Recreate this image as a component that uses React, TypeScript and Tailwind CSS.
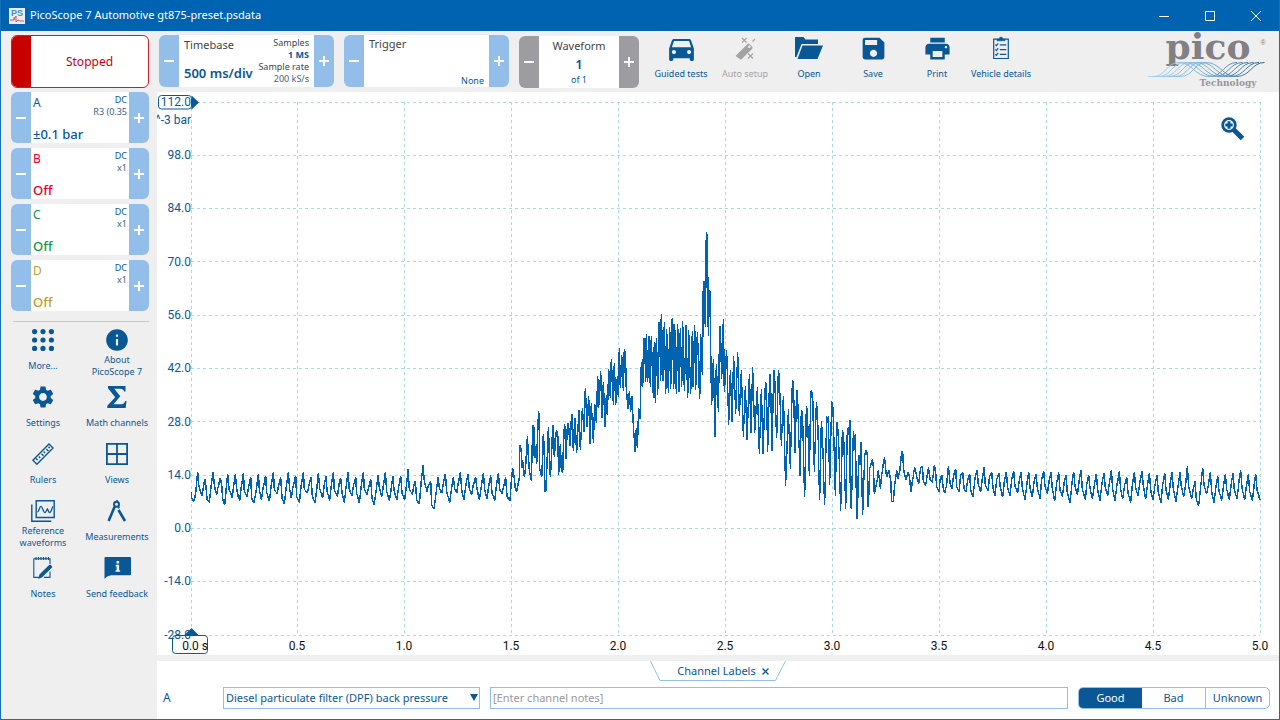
import React from "react";
import { MdDirectionsCar, MdInfo, MdPrint, MdSave, MdSettings } from "react-icons/md";

/* ---------- waveform data: x,y pairs stored at three units per pixel ---------- */

type Segment = { ox: number; oy: number; pts: string };

const segments: Segment[] = [
  {
    ox: 33,
    oy: 358,
    pts: `4,128 5,145 11,155 14,145 18,122 23,66 26,105 30,122 36,137 39,120 44,88 48,110 51,148 58,158 62,120 69,66 73,105 76,122 80,134 83,118 91,84 95,105 98,148 104,166 108,125 113,72 117,118 122,130 126,145 130,115 136,74 140,118 144,137 149,152 153,118 160,69 163,125 171,140 176,110 182,81 185,145 192,160 198,125 205,72 208,118 214,150 220,110 227,78 230,128 238,154 243,110 250,66 253,118 261,132 265,110 272,83 276,145 283,163 288,115 295,68 299,118 304,145 310,105 317,78 320,140 328,158 333,110 340,68 343,118 352,130 357,105 363,82 367,140 375,160 380,120 385,69 389,115 398,145 402,110 408,78 411,125 419,152 424,105 430,66 433,120 442,140 447,105 452,84 456,130 463,158 469,105 474,66 478,120 486,137 491,105 497,81 500,130 508,160 514,105 520,68 523,118 531,134 542,88 546,145 552,166 558,125 564,76 568,115 575,140 580,108 586,66 590,125 598,152 603,120 609,78 612,122 621,150 626,110 632,78 636,130 644,150 649,110 654,58 658,118 667,134 671,110 676,93 680,150 688,163 693,100 699,47 703,95 711,125 716,105 722,93 725,165 732,178 738,130 744,82 748,115 755,130 760,100 766,72 770,125 779,158 784,120 790,83 794,118 800,130 804,105 811,66 815,120 822,150 827,110 834,72 838,118 845,134 850,105 857,83 861,118 868,150 873,115 880,70 884,120 891,148 896,110 902,77 906,130 914,152 919,110 925,69 929,118 936,132 941,110 947,83 951,140 960,154`,
  },
  {
    ox: 353,
    oy: 128,
    pts: `3,795 8,745 13,775 15,803 20,815 24,795 28,775 29,695 31,675 34,697 35,745 38,722 43,772 47,740 52,650 55,710 58,752 64,784 68,622 71,615 73,715 76,680 80,733 83,632 86,574 88,635 89,745 95,772 98,710 100,643 103,698 103,810 107,817 110,757 115,622 118,705 121,772 124,720 128,617 130,615 133,712 139,630 143,640 146,764 151,673 154,750 158,760 161,652 164,612 168,718 172,620 175,610 180,677 185,582 187,583 190,692 195,595 200,700 207,572 211,690 217,565 222,635 226,505 231,622 236,530 240,672 244,550 250,668 254,553 259,608 263,470 266,563 272,455 276,595 280,488 285,620 289,527 292,586 296,447 301,535 304,418 310,555 313,430 317,556 322,470 325,530 328,385 331,505 335,405 340,512 343,388 346,400 349,510 354,568 358,515 362,575 366,530 369,600 375,695 379,625 382,683 386,565 390,597 394,427 398,500 401,358 404,355 407,485 409,343 413,485 416,350 418,348 421,502 424,350 430,535 433,368 436,548 439,355 443,525 446,307 449,310 452,482 454,283 459,482 463,308 467,523 470,328 475,520 479,322 482,508 485,305 488,295 491,508 494,313 499,523 503,313 507,515 511,325 515,500 518,305 523,512 528,317 533,535 536,332 542,523 547,335 549,502 554,317 557,510 562,337 569,538 572,343 577,466 580,190 583,185 586,322 589,38 592,50 595,347 598,212 601,218 602,395 605,555 610,418 615,652 619,433 625,575 629,318 631,318 635,478 640,298 643,515 650,390 656,615 661,452 666,605 671,410 677,582 683,397 688,588 694,452 700,650 706,500 711,660 718,463 723,640 728,443 734,640 742,502 748,703`,
  },
  {
    ox: 583,
    oy: 248,
    pts: `64,148 69,343 76,127 79,138 83,335 89,103 91,105 96,332 101,108 103,90 110,295 115,92 118,110 124,317 130,168 137,438 145,207 151,387 157,122 160,127 165,340 170,152 172,152 180,408 184,212 187,218 194,472 199,200 202,210 208,408 212,175 214,152 218,165 223,395 229,188 232,212 239,480 244,245 247,290 254,495 260,230 262,250 265,230 269,435 275,185 278,200 280,235 286,468 290,248 292,250 296,305 302,513 307,272 311,290 317,508 322,265 325,285 330,242 331,465 334,508 340,275 343,330 346,282 350,525 352,538 356,345 360,375 363,308 368,525 374,347 379,330 382,345 383,485 385,502 389,387 397,358 400,380 403,462 412,418 415,392 421,447 425,405 433,353 440,412 447,392 452,420 455,485 460,485 464,435 470,392 474,417 480,390 485,335 488,338 491,390 498,420 504,398 508,410 513,457 517,425 524,383 530,410 536,432 542,383 547,378 550,425 557,438 565,383 570,420 577,428 583,375 587,400 590,440 597,457`,
  },
  {
    ox: 763,
    oy: 358,
    pts: `60,90 65,75 69,110 74,130 80,105 85,50 90,100 96,117 101,75 107,58 110,110 117,127 122,75 128,68 132,115 138,127 143,90 149,73 152,120 159,142 165,85 171,60 175,105 182,125 187,85 192,53 196,105 204,123 209,78 215,68 219,115 225,138 230,90 237,70 241,115 248,142 253,95 259,66 263,115 270,138 275,90 281,65 285,110 293,130 298,90 303,67 307,115 315,150 321,100 326,68 330,115 337,142 342,95 348,73 352,115 360,147 365,90 371,65 375,110 382,132 387,95 393,68 397,118 404,153 410,100 416,68 420,120 427,140 432,100 438,77 442,130 450,158 456,100 461,66 465,110 472,135 477,95 483,60 487,118 496,150 500,105 506,76 510,115 517,148 523,105 529,72 533,120 540,152 546,100 552,70 556,115 563,137 568,100 574,62 578,118 585,152 591,105 598,65 602,120 608,147 614,105 620,82 624,130 632,158 637,105 643,68 647,115 654,137 660,95 666,65 670,110 677,147 683,100 688,70 692,120 699,150 705,105 711,77 715,130 723,158 728,105 734,70 738,120 745,150 750,105 756,68 760,118 768,155 774,110 780,68 784,112 791,140 797,105 802,50 806,110 815,147 820,115 825,95 829,150 836,168 842,110 848,55 852,105 860,132 866,100 871,68 875,125 882,160 888,110 893,80 897,125 905,152 911,105 916,73 920,118 928,150 933,105 939,70 943,120 951,148 957,95 962,62 966,115 974,150 979,110 985,73 989,125 997,153 1002,110 1007,73 1011,120 1020,150`,
  },
];

const samples = segments.flatMap((s) =>
  s.pts.split(/\s+/).map((p) => {
    const [x, y] = p.split(",").map(Number);
    return [s.ox + x / 3, s.oy + y / 3] as const;
  }),
);

/* One vertical stroke per column, spanning the values of the pen's width around it. */
function columns() {
  const pen = 0.3;
  const range = new Map<number, [number, number]>();
  const grow = (c: number, y: number) => {
    const r = range.get(c);
    range.set(c, r ? [Math.min(r[0], y), Math.max(r[1], y)] : [y, y]);
  };
  samples.forEach(([x, y], i) => {
    const [nx, ny] = samples[i + 1] ?? [x, y];
    for (let k = 0; k <= 12; k++) {
      const px = x + ((nx - x) * k) / 12;
      const py = y + ((ny - y) * k) / 12;
      grow(Math.floor(px - pen), py);
      grow(Math.floor(px + pen), py);
    }
  });
  return [...range].map(([c, [lo, hi]]) => `M${c + 0.5} ${Math.floor(lo)}V${Math.max(Math.round(hi), Math.floor(lo) + 1)}`).join("");
}

const trace = columns();

/* ---------- icons ---------- */

const WandIcon = () => (
  <svg width="24" height="24" viewBox="0 0 24 24" fill="none" stroke="currentColor">
    <path d="M2.500 20 14.300 8.200a1.600 1.600 0 0 1 2.300 0l2.400 2.400a1.600 1.600 0 0 1 0 2.300L8 23.800z" fill="currentColor" stroke="none" />
    <circle cx="16.300" cy="10.800" r="1.300" fill="#efefef" stroke="none" />
    <path d="m9 2 4.500 4.500m0-4.500L9 6.500M15 17.500l5 5m0-5-5 5M19.500 5.500 22 3" strokeWidth="1.100" />
  </svg>
);

const FolderIcon = () => (
  <svg width="28" height="24" viewBox="0 0 28 24" fill="currentColor">
    <path d="M0 1h8.500l2 2.500H23V8H6.500L1.500 21H0z" />
    <path d="M7.500 9.500H28L22.500 23H2.500z" />
  </svg>
);

const ClipboardIcon = () => (
  <svg width="18" height="24" viewBox="0 0 18 24" fill="none" stroke="currentColor" strokeWidth="1.200">
    <path d="M5 3.200H1.700v19.300h14.600V3.200H13" />
    <path d="M5 4.800V2.800h2.300a1.700 1.700 0 0 1 3.400 0H13v2z" fill="currentColor" strokeWidth=".6" />
    <path d="m3.300 8.600 1.100 1.100 1.800-2.400M3.300 13.400l1.100 1.100 1.800-2.400M3.300 18.200l1.100 1.100 1.800-2.400M7.800 8.800h6.500M7.800 13.600h6.500M7.800 18.400h6.500" strokeWidth="1.200" />
  </svg>
);

const DotsIcon = () => (
  <svg width="22" height="22" viewBox="0 0 22 22" fill="currentColor">
    {[2.6, 11, 19.4].map((y) => [2.6, 11, 19.4].map((x) => <circle key={`${x}-${y}`} cx={x} cy={y} r="2.6" />))}
  </svg>
);

const SigmaIcon = () => (
  <svg width="20" height="22" viewBox="0 0 20 22" fill="currentColor">
    <path d="M1 0h17.500v5.500h-1.300C16.600 3.500 15.500 2.700 13 2.700H7.300l6 7.600-6.800 7.900h7.300c2.600 0 3.700-1 4.300-3.200h1.400L18.700 22H.3v-2.200l7.900-8.600L1 2.200z" />
  </svg>
);

const RulerIcon = () => (
  <svg width="22" height="22" viewBox="0 0 22 22" fill="none" stroke="currentColor" strokeWidth="1.400">
    <path d="M.9 17.200 17 1.100l4 4L4.900 21.200zM5.600 17.100l-1.700-1.700M8.200 14.900l-1.300-1.300M11.500 12.700l-2-2M13 9.900l-1.300-1.300M16.300 7.900l-2-2M17.800 5l-1.300-1.300" />
  </svg>
);

const ViewsIcon = () => (
  <svg width="22" height="22" viewBox="0 0 22 22" fill="none" stroke="currentColor" strokeWidth="1.800">
    <path d="M.9.9h20.200v20.200H.9zM11 1v20M1 11h20" />
  </svg>
);

const ReferenceIcon = () => (
  <svg width="24" height="22" viewBox="0 0 24 22" fill="none" stroke="currentColor" strokeWidth="1.400">
    <path d="M5.200.7h18v16.800h-18zM.8 4.500v16.800h19.500" />
    <path d="M6.500 12C8 12 8.400 6.300 10 6.300s2.200 6.300 3.700 6.300 1.600-2.600 2.700-3.600c1 1 1 3.600 2.400 3.600s2.200-6 3.400-6.300" strokeWidth="1.300" />
  </svg>
);

const CompassIcon = () => (
  <svg width="20" height="22" viewBox="0 0 20 22" fill="none" stroke="currentColor">
    <circle cx="9.500" cy="4.300" r="2.500" strokeWidth="2" />
    <path d="M10 0v2" strokeWidth="1.500" />
    <path d="m7.600 6.800-6 14.200M11.500 10l6.500 11" strokeWidth="2.600" />
    <path d="m11.200 6.500 1 1.800" strokeWidth="1.800" />
  </svg>
);

const NotesIcon = () => (
  <svg width="22" height="22" viewBox="0 0 22 22" fill="none" stroke="currentColor">
    <path d="M18 7V1.800H1.800v18.600h5M12 20.400h6v-6" strokeWidth="1.100" />
    <path d="M4 0v3M6.500 0v3M9 0v3M11.500 0v3M14 0v3M16.500 0v3" strokeWidth="1.200" />
    <path d="m7.500 17.500 9.800-9.700c1-.8 3.600 1.600 2.700 2.700l-9.800 9.800-4 1.700z" fill="currentColor" stroke="none" />
  </svg>
);

const FeedbackIcon = () => (
  <svg width="28" height="22" viewBox="0 0 28 22" fill="currentColor">
    <path d="M2.500 0H27a1 1 0 0 1 1 1v16.200a1 1 0 0 1-1 1H8.500C5 18.500 3.200 20.200 1.500 22V1a1 1 0 0 1 1-1z" />
    <path d="M13.500 4h2.600v2.400h-2.600zM12.700 7.800h3.400v5.400h1v1.600h-4.600v-1.600h1.100V9.400h-.9z" fill="#efefef" />
  </svg>
);

const ZoomIcon = () => (
  <svg width="24" height="24" viewBox="0 0 24 24" fill="none" stroke="#0a5796">
    <path d="m12.500 12.500 9 9" strokeWidth="5" />
    <circle cx="8" cy="8" r="6.300" fill="#fff" strokeWidth="2.800" />
    <path d="M8 4.300v7.400M4.300 8h7.400" strokeWidth="3" />
  </svg>
);

const AppIcon = () => (
  <svg width="16" height="16" viewBox="0 0 16 16">
    <rect width="16" height="16" fill="#e9eef4" />
    <text x="8" y="8" textAnchor="middle" fontSize="9" fontFamily="Liberation Sans, sans-serif" fontWeight="700" fill="#3f8fcd">PS</text>
    <path d="M1 12h4l2-4v6l2-2 2 1h4M5 9v3" fill="none" stroke="#e0525f" strokeWidth="1" />
  </svg>
);

const Logo = () => (
  <svg className="shrink-0 overflow-visible" width="122" height="56" viewBox="0 0 122 56" role="img" aria-label="Pico Technology">
    <defs>
      <linearGradient id="wave" gradientUnits="userSpaceOnUse" x1="0" y1="0" x2="120" y2="0">
        <stop offset="0" stopColor="#a9d4f5" />
        <stop offset=".5" stopColor="#6fa9d6" />
        <stop offset="1" stopColor="#0d4a7c" />
      </linearGradient>
    </defs>
    <text x="61" y="24" textAnchor="middle" fontFamily="DejaVu Serif, serif" fontSize="36" fontWeight="700" fill="#808085">pico</text>
    <text x="116" y="10" textAnchor="middle" fontFamily="Liberation Sans, sans-serif" fontSize="7" fill="#808085">®</text>
    <g fill="none" stroke="url(#wave)" strokeWidth=".9">
      {[0, 1, 2, 3, 4, 5].map((i) => (
        <path key={i} d={`M${1 + i * 3} 41.500H${6 + i * 5.5}c13 0 13-14 26-14s16 14 30 14 15-14 28-14`} />
      ))}
    </g>
    <text x="81" y="51" textAnchor="middle" fontFamily="DejaVu Serif, serif" fontSize="9" fontWeight="700" fill="#97979b">Technology</text>
  </svg>
);

/* ---------- controls ---------- */

const Minus = () => (
  <svg width="10" height="10" viewBox="0 0 10 10"><path d="M0 5h10" stroke="#fff" strokeWidth="2" /></svg>
);
const Plus = () => (
  <svg width="10" height="10" viewBox="0 0 10 10"><path d="M0 5h10M5 0v10" stroke="#fff" strokeWidth="2" /></svg>
);

function Stepper({ label, className, gray, children }: { label: string; className: string; gray?: boolean; children: React.ReactNode }) {
  const side = gray ? "flex w-5 shrink-0 items-center justify-center bg-[#9d9da1]" : "flex w-5 shrink-0 items-center justify-center bg-[#93beea]";
  return (
    <div className={`flex overflow-hidden rounded-md bg-white ${className}`}>
      <button type="button" aria-label={`${label} down`} className={side}><Minus /></button>
      <div className="flex min-w-0 flex-1">{children}</div>
      <button type="button" aria-label={`${label} up`} className={side}><Plus /></button>
    </div>
  );
}

const channels = [
  { name: "A", range: "±0.1 bar", probe: "R3 (0.35", color: "text-[#0a5796]" },
  { name: "B", range: "Off", probe: "x1", color: "text-[#e4002b]" },
  { name: "C", range: "Off", probe: "x1", color: "text-[#109648]" },
  { name: "D", range: "Off", probe: "x1", color: "text-[#c69a2d]" },
];

const tools = [
  { label: "More...", icon: <DotsIcon /> },
  { label: "About PicoScope\u00a07", icon: <MdInfo className="size-[26px] shrink-0" /> },
  { label: "Settings", icon: <MdSettings className="size-[26px] shrink-0" /> },
  { label: "Math channels", icon: <SigmaIcon /> },
  { label: "Rulers", icon: <RulerIcon /> },
  { label: "Views", icon: <ViewsIcon /> },
  { label: "Reference waveforms", icon: <ReferenceIcon /> },
  { label: "Measurements", icon: <CompassIcon /> },
  { label: "Notes", icon: <NotesIcon /> },
  { label: "Send feedback", icon: <FeedbackIcon /> },
];

const actions = [
  { label: "Guided tests", icon: <MdDirectionsCar className="size-[33px] shrink-0" /> },
  { label: "Auto setup", icon: <WandIcon />, off: true },
  { label: "Open", icon: <FolderIcon /> },
  { label: "Save", icon: <MdSave className="size-[29px] shrink-0" /> },
  { label: "Print", icon: <MdPrint className="size-[29px] shrink-0" /> },
  { label: "Vehicle details", icon: <ClipboardIcon /> },
];

const yLabels = ["98.0", "84.0", "70.0", "56.0", "42.0", "28.0", "14.0", "0.0", "-14.0", "-28.0"];
const xLabels = ["0.5", "1.0", "1.5", "2.0", "2.5", "3.0", "3.5", "4.0", "4.5", "5.0"];

function Chart() {
  const xs = Array.from({ length: 11 }, (_, i) => Math.floor(34 + i * 106.9) + 0.5);
  const ys = Array.from({ length: 11 }, (_, i) => Math.floor(10 + i * 53.3) + 0.5);
  return (
    <div className="relative bg-white">
      <svg className="block h-auto w-full" viewBox="0 0 1122 563" fontFamily="Roboto, sans-serif" fontSize="12">
        <g stroke="#add8e6" strokeDasharray="3 3" shapeRendering="crispEdges">
          {xs.map((x) => <line key={x} x1={x} x2={x} y1="10" y2="543" />)}
          {ys.map((y) => <line key={y} x1="34" x2="1103" y1={y} y2={y} />)}
        </g>
        <path d={trace} fill="none" stroke="#0063b1" shapeRendering="crispEdges" />
        <g fill="#0a5796" textAnchor="end">
          {yLabels.map((t, i) => <text key={t} x="34" y={67 + Math.round(i * 53.3)}>{t}</text>)}
          <text x="34" y="32">^-3 bar</text>
        </g>
        <g fill="#111" textAnchor="middle">
          {xLabels.map((t, i) => <text key={t} x={Math.floor(140.9 + i * 106.9)} y="558">{t}</text>)}
        </g>
        <path d="M34.500 3.500 42 10.500l-7.500 7z" fill="#0a5796" />
        <rect x="1.500" y="3.500" width="33" height="13.500" rx="3" fill="#fff" stroke="#0a5796" />
        <text x="34" y="14" textAnchor="end" fill="#0a5796">112.0</text>
        <path d="M27 543.500 34.500 536l7.500 7.500z" fill="#0a5796" />
        <rect x="15.500" y="543.500" width="35" height="18" rx="3" fill="none" stroke="#0a5796" />
        <text x="51" y="558" textAnchor="end" fill="#111">0.0 s</text>
      </svg>
      <button type="button" aria-label="Zoom in" className="absolute top-[25px] right-[34px]"><ZoomIcon /></button>
    </div>
  );
}

export default function App() {
  return (
    <div className="flex min-h-screen flex-col border border-t-0 border-[#1470b8] bg-[#efefef] font-['Noto_Sans',sans-serif] text-[11px] text-[#0a5796]">
      <header className="flex h-[31px] items-center bg-[#0063b1] pl-2 text-white">
        <AppIcon />
        <h1 className="ml-[5px]">PicoScope 7 Automotive gt875-preset.psdata</h1>
        <div className="ml-auto flex h-full">
          <button type="button" aria-label="Minimize" className="flex w-[46px] items-center justify-center">
            <svg width="10" height="10" viewBox="0 0 10 10"><path d="M0 5.500h10" stroke="#fff" /></svg>
          </button>
          <button type="button" aria-label="Maximize" className="flex w-[46px] items-center justify-center">
            <svg width="10" height="10" viewBox="0 0 10 10"><path d="M.5.5h9v9h-9z" fill="none" stroke="#fff" /></svg>
          </button>
          <button type="button" aria-label="Close" className="flex w-[46px] items-center justify-center">
            <svg width="10" height="10" viewBox="0 0 10 10"><path d="m0 0 10 10M10 0 0 10" stroke="#fff" /></svg>
          </button>
        </div>
      </header>

      <div className="flex flex-1">
        <aside className="flex w-[156px] shrink-0 flex-col pt-1 pr-2 pl-[10px]">
          <button type="button" className="flex h-[53px] overflow-hidden rounded-md border border-[#c81e28] bg-white text-xs text-[#c8000a]">
            <span className="h-full w-[19px] bg-[#c80000]" />
            <span className="flex h-full flex-1 items-center justify-center">Stopped</span>
          </button>
          <div className="mt-1 flex flex-col gap-[5px]">
            {channels.map((c) => (
              <Stepper key={c.name} label={`Channel ${c.name}`} className="h-[51px]">
                <div className={`flex flex-1 flex-col justify-between pt-[3px] pl-0.5 ${c.color}`}>
                  <span className="text-xs leading-4">{c.name}</span>
                  <span className="text-[13px] leading-[18px] font-medium whitespace-nowrap">{c.range}</span>
                </div>
                <div className="pt-0.5 pr-0.5 text-right text-[9px] leading-3 whitespace-nowrap">
                  <div>DC</div>
                  <div className="text-[#3a5f85]">{c.probe}</div>
                </div>
              </Stepper>
            ))}
          </div>
          <hr className="mt-[10px] ml-0.5 border-[#c8c8c8]" />
          <nav className="mt-1 -mr-[5px] -ml-[5px] grid grid-cols-2">
            {tools.map((t) => (
              <button type="button" key={t.label} className="flex h-[57px] flex-col items-center gap-0.5 px-1 pt-0.5">
                <span className="flex h-6 items-center">{t.icon}</span>
                <span className="flex h-6 items-center text-center text-[9px] leading-3">{t.label}</span>
              </button>
            ))}
          </nav>
        </aside>

        <main className="flex min-w-0 flex-1 flex-col">
          <div className="flex h-[61px] items-start gap-[10px] pt-1 pr-[10px] pl-0.5">
            <Stepper label="Timebase" className="h-[52px] w-[175px]">
              <div className="flex flex-1 justify-between px-[5px]">
                <div className="flex flex-col justify-between pt-0.5 pb-1">
                  <span className="leading-4 text-[#444]">Timebase</span>
                  <span className="text-[13px] leading-5 font-semibold whitespace-nowrap">500 ms/div</span>
                </div>
                <div className="pt-0.5 text-right text-[9px] leading-3 whitespace-nowrap text-[#444]">
                  <div>Samples</div>
                  <div className="font-bold text-[#0a5796]">1 MS</div>
                  <div>Sample rate</div>
                  <div className="text-[#3a5f85]">200 kS/s</div>
                </div>
              </div>
            </Stepper>
            <Stepper label="Trigger" className="h-[52px] w-[165px]">
              <div className="flex flex-1 flex-col justify-between px-[5px] pt-px">
                <span className="leading-4 text-[#444]">Trigger</span>
                <span className="text-right text-[9px] leading-3">None</span>
              </div>
            </Stepper>
            <Stepper label="Waveform" gray className="mt-px h-[52px] w-[120px]">
              <div className="flex flex-1 flex-col items-center pt-0.5">
                <span className="leading-4 text-[#444]">Waveform</span>
                <span className="text-[13px] leading-5 font-semibold">1</span>
                <span className="text-[9px] leading-3">of 1</span>
              </div>
            </Stepper>
            <div className="flex">
              {actions.map((a) => (
                <button
                  type="button"
                  key={a.label}
                  disabled={a.off}
                  className="flex w-16 flex-col items-center gap-2 pt-px text-[9px] leading-3 whitespace-nowrap disabled:text-[#a3a3a3]"
                >
                  <span className="flex h-6 items-center">{a.icon}</span>
                  <span>{a.label}</span>
                </button>
              ))}
            </div>
            <div className="ml-auto"><Logo /></div>
          </div>

          <Chart />

          <section className="mt-1.5 flex flex-1 flex-col bg-white">
            <div className="relative mx-auto flex h-[21px] w-[136px] items-center justify-center gap-1 pl-3">
              <svg className="absolute inset-0" width="136" height="21" viewBox="0 0 136 21" fill="none" stroke="#93beea">
                <path d="m.5 0 9.500 19.500h115.500L135.500 0" />
              </svg>
              <span className="whitespace-nowrap">Channel Labels</span>
              <button type="button" aria-label="Close Channel Labels" className="p-0.5">
                <svg width="7" height="7" viewBox="0 0 7 7"><path d="m.5.5 6 6m0-6-6 6" stroke="#0a5796" strokeWidth="1.300" /></svg>
              </button>
            </div>
            <div className="mt-[5px] flex h-[22px] pr-[9px] pl-1.5">
              <label htmlFor="channel-label" className="w-[60px] text-xs leading-[22px]">A</label>
              <div className="relative w-[257px]">
                <select id="channel-label" className="h-full w-full appearance-none border border-[#93beea] bg-white pl-0.5">
                  <option>Diesel particulate filter (DPF) back pressure</option>
                </select>
                <svg className="pointer-events-none absolute top-[7px] right-0.5" width="8" height="7" viewBox="0 0 8 7"><path d="M0 0h8L4 7z" fill="#0a5796" /></svg>
              </div>
              <input aria-label="Channel notes" placeholder="[Enter channel notes]" className="ml-[10px] min-w-0 flex-1 border border-[#93beea] px-0.5 placeholder:text-[#999]" />
              <div className="ml-[10px] flex w-[192px] overflow-hidden rounded-[5px] border border-[#93beea]">
                <button type="button" className="flex-1 bg-[#0a5796] text-white">Good</button>
                <button type="button" className="flex-1 border-r border-[#93beea]">Bad</button>
                <button type="button" className="flex-1">Unknown</button>
              </div>
            </div>
          </section>
        </main>
      </div>
    </div>
  );
}
